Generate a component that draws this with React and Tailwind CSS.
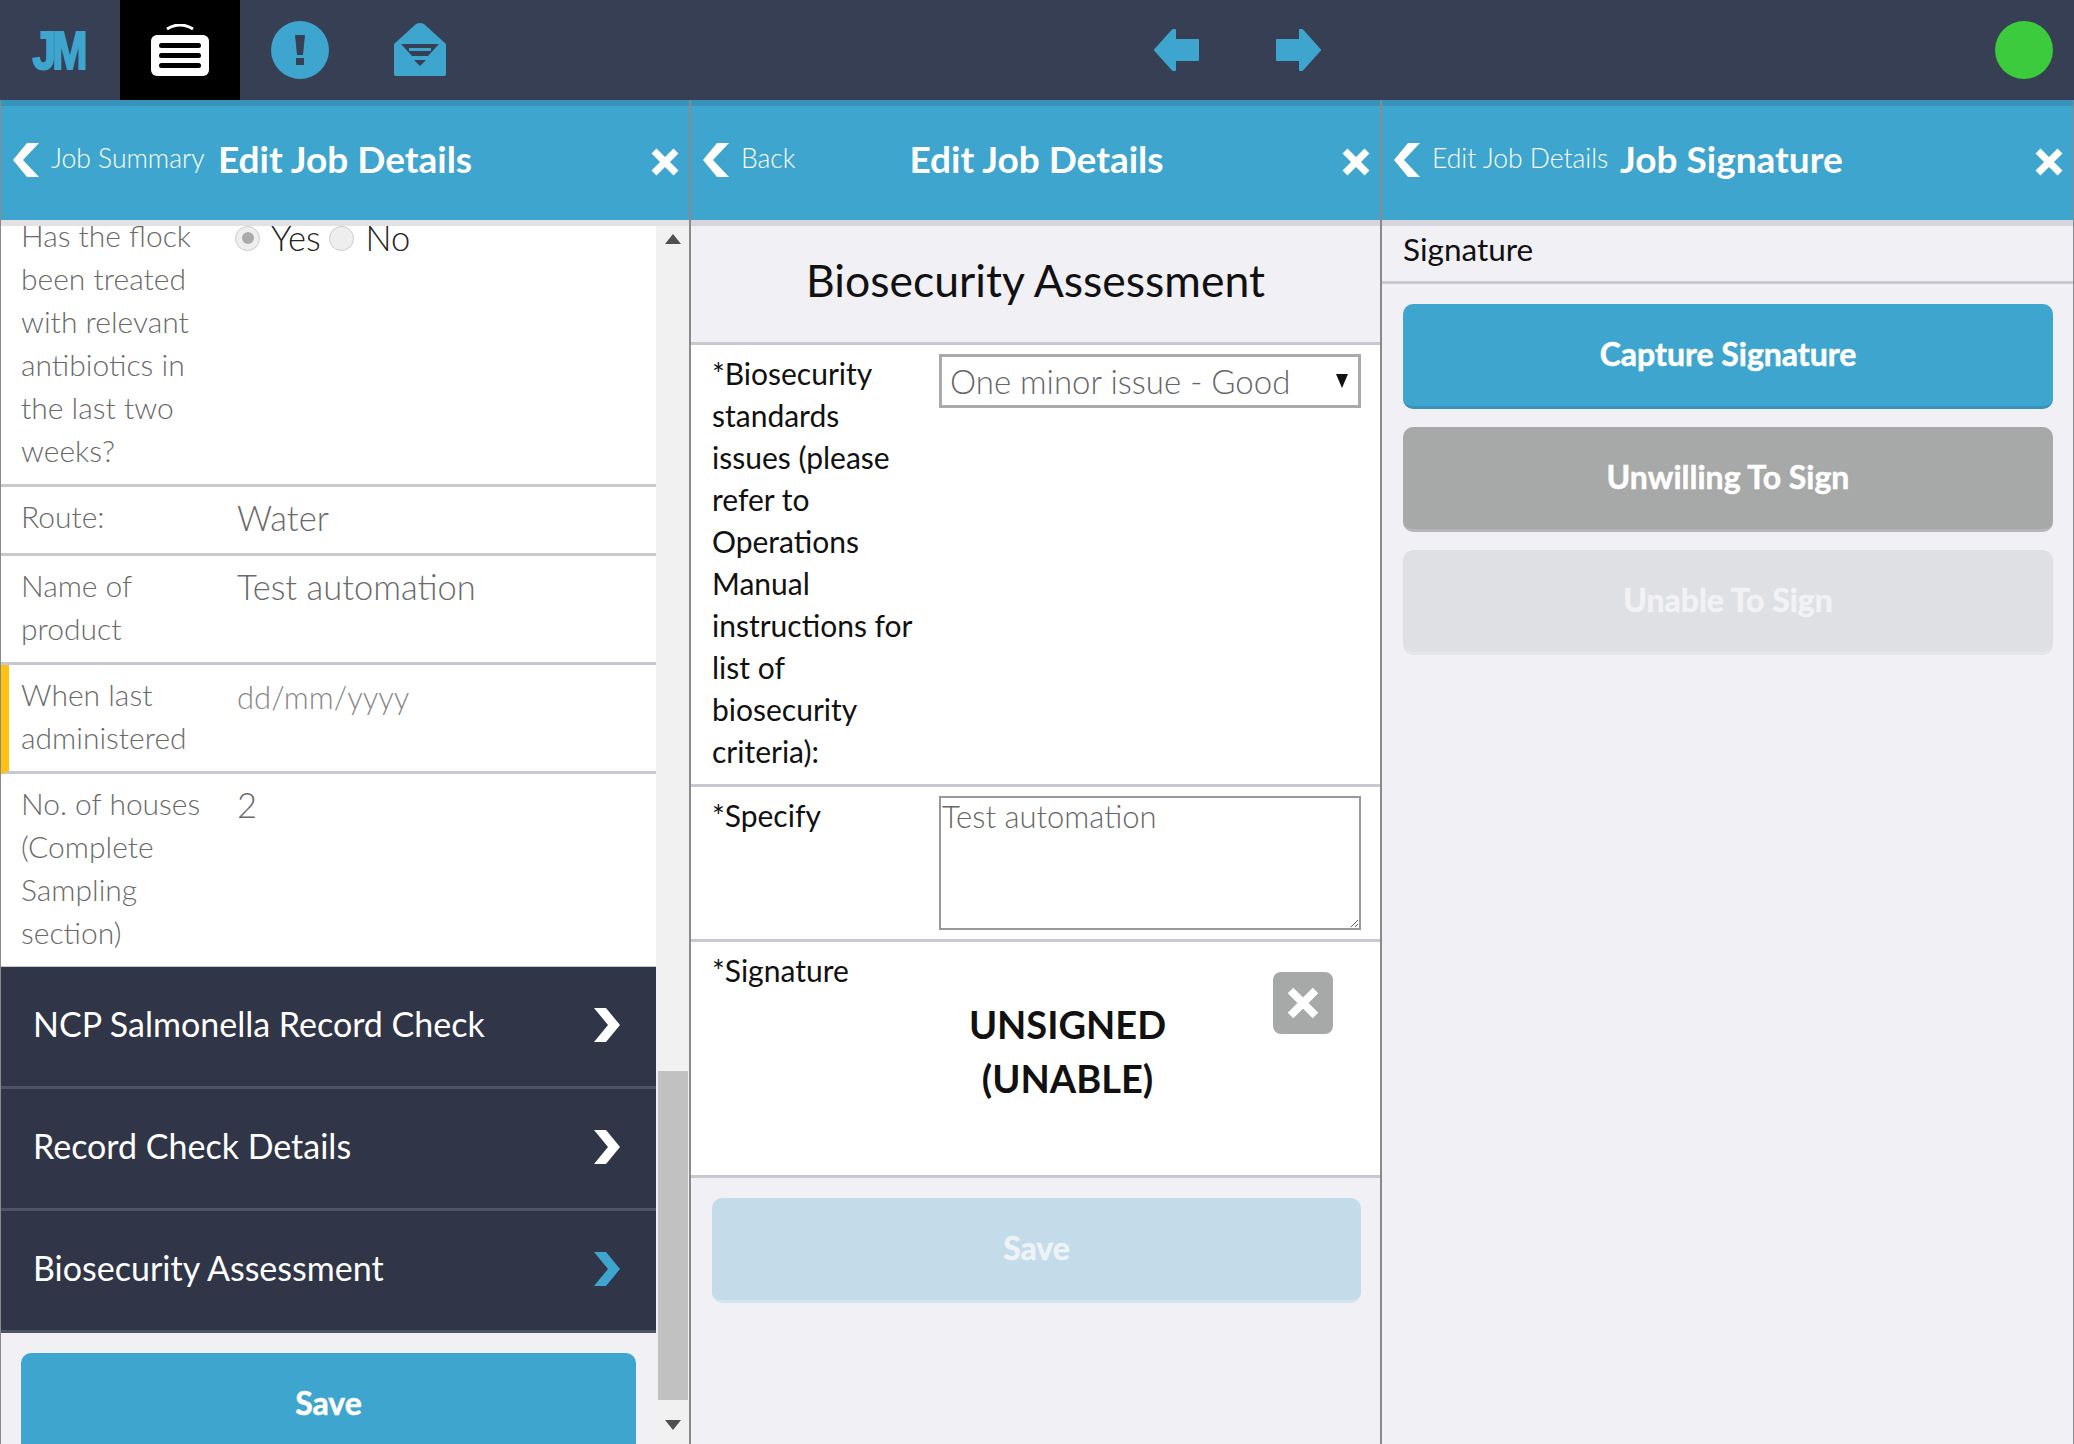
function Chevron({ dir = "left", color = "#fff", className = "" }) {
  const pts = dir === "left" ? "26,0 10,17 26,34 14,34 0,17 14,0" : "0,0 12,0 26,17 12,34 0,34 14,17";
  return (
    <svg width="26" height="34" viewBox="0 0 26 34" className={className}>
      <polygon points={pts} fill={color} />
    </svg>
  );
}

function CloseX({ size = 30 }) {
  return (
    <svg width={size} height={size} viewBox="0 0 30 30">
      <path d="M4 4 L26 26 M26 4 L4 26" stroke="#fff" strokeWidth="7" />
    </svg>
  );
}

function Header({ back, backClass, title, titleClass = "" }) {
  return (
    <div className="shrink-0 h-[120px] border-t-[6px] border-[#3893ba] bg-[#3ea5ce] flex items-center text-white pb-[6px]">
      <div className={`flex items-center shrink-0 pl-[12px] ${backClass}`}>
        <Chevron />
        <span className="ml-[12px] -mt-[2px] text-[26.5px] font-light whitespace-nowrap">{back}</span>
      </div>
      <div className={`flex-1 -mt-[2px] text-[37px] font-bold whitespace-nowrap ${titleClass}`}>{title}</div>
      <div className="shrink-0 mr-[9px] mt-[3px]">
        <CloseX />
      </div>
    </div>
  );
}

function Row({ label, value, children, accent }) {
  return (
    <div className={`flex border-b-[3px] border-[#c8c8d0] bg-white pt-[8px] pb-[12px] ${accent ? "border-l-[8px] border-l-[#ffc20e] pl-[12px]" : "pl-[20px]"}`}>
      <div className="w-[216px] shrink-0 pr-[8px] text-[#6a6a6a] text-[30px] leading-[43px] font-light">{label}</div>
      <div className="text-[34.5px] leading-[46px] font-light text-[#6a6a6a]">{value}{children}</div>
    </div>
  );
}

function MenuRow({ text, color = "#fff" }) {
  return (
    <div className="h-[122px] pl-[32px] pr-[36px] pb-[6px] flex items-center justify-between border-b-[3px] border-[#4e5464] text-white text-[34px]">
      <span>{text}</span>
      <Chevron dir="right" color={color} className="mt-[2px]" />
    </div>
  );
}

function Btn({ text, className = "" }) {
  return (
    <div className={`h-[105px] pb-[3px] rounded-[10px] flex items-center justify-center font-bold text-[32px] [-webkit-text-stroke:0.5px_currentColor] text-white border-b-[3px] ${className}`}>
      {text}
    </div>
  );
}

function TopBar() {
  return (
    <div className="h-[100px] bg-[#363f54] flex items-center relative shrink-0">
      <div className="w-[120px] h-full flex items-center justify-center pr-[3px]">
        <span className="text-[#3ea5ce] text-[53px] font-bold tracking-[-0.09em] leading-none scale-x-[0.8] [font-family:'Liberation_Sans',sans-serif] [-webkit-text-stroke:2px_#3ea5ce]">JM</span>
      </div>
      <div className="w-[120px] h-full bg-black flex items-center justify-center">
        <svg width="58" height="52" viewBox="0 0 58 52">
          <path d="M16 5 Q29 -3 42 5" stroke="#fff" strokeWidth="3" fill="none" />
          <rect x="0" y="11" width="58" height="41" rx="6" fill="#fff" />
          <rect x="8" y="19" width="42" height="5" rx="2.5" fill="#000" />
          <rect x="8" y="29" width="42" height="5" rx="2.5" fill="#000" />
          <rect x="8" y="39" width="42" height="5" rx="2.5" fill="#000" />
        </svg>
      </div>
      <div className="w-[120px] h-full flex items-center justify-center">
        <svg width="58" height="58" viewBox="0 0 58 58">
          <circle cx="29" cy="29" r="29" fill="#3ea5ce" />
          <polygon points="24,14 34,14 32,34 26,34" fill="#363f54" />
          <rect x="25" y="37" width="8" height="7" fill="#363f54" />
        </svg>
      </div>
      <div className="w-[120px] h-full flex items-center justify-center">
        <svg width="52" height="54" viewBox="0 0 52 54">
          <path d="M0 21 L22 1 Q26 -1 30 1 L52 21 V51 Q52 53 50 53 H2 Q0 53 0 51 Z" fill="#3ea5ce" />
          <polygon points="7,21 45,21 34,33 18,33" fill="#363f54" />
          <rect x="15" y="25" width="22" height="3" fill="#3ea5ce" />
          <polygon points="20,37 32,37 26,43" fill="#363f54" />
        </svg>
      </div>
      <div className="flex-1 flex items-center justify-center gap-[77px]">
        <svg width="45" height="42" viewBox="0 0 45 42">
          <polygon points="1,21 19,1 21,1 21,11 44,11 44,31 21,31 21,41 19,41" fill="#3ea5ce" stroke="#3ea5ce" strokeWidth="2" strokeLinejoin="round" />
        </svg>
        <svg width="45" height="42" viewBox="0 0 45 42">
          <polygon points="44,21 26,1 24,1 24,11 1,11 1,31 24,31 24,41 26,41" fill="#3ea5ce" stroke="#3ea5ce" strokeWidth="2" strokeLinejoin="round" />
        </svg>
      </div>
      <div className="w-[58px] h-[58px] rounded-full bg-[#3ccb3c] mr-[21px]" />
    </div>
  );
}

function LeftPanel() {
  return (
    <div className="w-[691px] shrink-0 border-l-[1px] border-r-[2px] border-[#8a8a8a] flex flex-col h-[1344px] overflow-hidden">
      <Header back="Job Summary" backClass="w-[217px]" title="Edit Job Details" />
      <div className="flex-1 border-t-[6px] border-[#e2e2e4] flex min-h-0">
        <div className="w-[655px] shrink-0 bg-[#f0f0f5] overflow-hidden">
          <Row
            label={
              <>
                <div className="-mt-[20px]">Has the flock</div>
                <div>been treated</div>
                <div>with relevant</div>
                <div>antibiotics in</div>
                <div>the last two</div>
                <div>weeks?</div>
              </>
            }
          >
            <div className="flex items-center -mt-[19px] -ml-[2px] text-[#222]">
              <span className="w-[25px] h-[25px] rounded-full bg-[#eee] border border-[#ccc] flex items-center justify-center mr-[11px]">
                <span className="w-[12px] h-[12px] rounded-full bg-[#aaa]" />
              </span>
              <span>Yes</span>
              <span className="w-[25px] h-[25px] rounded-full bg-[#eee] border border-[#ccc] ml-[8px] mr-[12px]" />
              <span>No</span>
            </div>
          </Row>
          <Row label="Route:" value="Water" />
          <Row label={<>Name of product</>} value="Test automation" />
          <Row accent label={<>When last administered</>} value={<span className="text-[#888] text-[31px]">dd/mm/yyyy</span>} />
          <Row label={<>No. of houses (Complete Sampling section)</>} value="2" />
          <div className="bg-[#303647] -mt-[2px]">
            <MenuRow text="NCP Salmonella Record Check" />
            <MenuRow text="Record Check Details" />
            <MenuRow text="Biosecurity Assessment" color="#3ea5ce" />
          </div>
          <div className="px-[20px] pt-[20px]">
            <Btn text="Save" className="bg-[#3ea5ce] border-[#3ea5ce]" />
          </div>
        </div>
        <div className="flex-1 bg-[#f1f1f1] flex flex-col items-center">
          <svg width="16" height="10" viewBox="0 0 16 10" className="mt-[8px]">
            <polygon points="8,0 16,10 0,10" fill="#505050" />
          </svg>
          <div className="flex-1" />
          <div className="w-[30px] h-[329px] bg-[#c1c1c1]" />
          <svg width="16" height="10" viewBox="0 0 16 10" className="mt-[20px] mb-[14px]">
            <polygon points="0,0 16,0 8,10" fill="#505050" />
          </svg>
        </div>
      </div>
    </div>
  );
}

const BIO_LABEL = ["*Biosecurity", "standards", "issues (please", "refer to", "Operations", "Manual", "instructions for", "list of", "biosecurity", "criteria):"];

function MiddlePanel() {
  return (
    <div className="w-[691px] shrink-0 border-r-[2px] border-[#8a8a8a] flex flex-col h-[1344px] overflow-hidden">
      <Header back="Back" backClass="w-[150px]" title="Edit Job Details" titleClass="text-center pr-[109px]" />
      <div className="flex-1 bg-[#f0f0f5] border-t-[6px] border-[#d6d6dc]">
        <div className="h-[119px] pb-[7px] flex items-center justify-center text-[44.5px] text-[#111] border-b-[3px] border-[#c8c8d0]">
          Biosecurity Assessment
        </div>
        <div className="flex bg-white border-b-[3px] border-[#c8c8d0] pl-[21px] pr-[19px] pt-[9px] pb-[10px]">
          <div className="w-[227px] -mt-[2px] mb-[2px] shrink-0 text-[30px] leading-[42px] font-normal text-[#111]">
            {BIO_LABEL.map((line) => (
              <div key={line}>{line}</div>
            ))}
          </div>
          <div className="flex-1 relative">
            <select
              defaultValue="One minor issue - Good"
              className="appearance-none w-full h-[54px] border-[3px] border-[#aaa] rounded-none bg-white pl-[8px] pb-[5px] text-[33px] font-light text-[#666] outline-none"
            >
              <option>One minor issue - Good</option>
            </select>
            <svg width="12" height="14" viewBox="0 0 12 14" className="absolute right-[13px] top-[20px]">
              <polygon points="0,0 12,0 6,14" fill="#111" />
            </svg>
          </div>
        </div>
        <div className="flex bg-white border-b-[3px] border-[#c8c8d0] pl-[21px] pr-[19px] pt-[9px] pb-[9px]">
          <div className="w-[227px] -mt-[2px] shrink-0 text-[30px] leading-[42px] text-[#111]">*Specify</div>
          <textarea
            readOnly
            defaultValue="Test automation"
            className="flex-1 h-[134px] border-[2px] border-[#999] bg-white pl-[1px] text-[31px] font-light leading-[36px] text-[#666] outline-none"
          />
        </div>
        <div className="bg-white border-b-[3px] border-[#c8c8d0] h-[236px] pl-[21px] pr-[47px] pt-[7px] flex">
          <div className="w-[150px] shrink-0 text-[30px] leading-[42px] text-[#111] whitespace-nowrap">*Signature</div>
          <div className="flex-1 pt-[48px] text-center text-[38px] leading-[54px] font-bold text-[#111]">
            UNSIGNED
            <br />
            (UNABLE)
          </div>
          <div className="w-[60px] h-[62px] mt-[23px] rounded-[8px] bg-[#a7a9a8] flex items-center justify-center">
            <CloseX size={34} />
          </div>
        </div>
        <div className="pl-[21px] pr-[19px] pt-[20px]">
          <Btn text="Save" className="bg-[#c4dcea] border-[#d4e4ee] !text-[#eef3f7]" />
        </div>
      </div>
    </div>
  );
}

function RightPanel() {
  return (
    <div className="flex-1 border-r-[1px] border-[#8a8a8a] flex flex-col h-[1344px] overflow-hidden">
      <Header back="Edit Job Details" backClass="w-[238px]" title="Job Signature" />
      <div className="flex-1 bg-[#f0f0f5] border-t-[6px] border-[#d6d6dc]">
        <div className="h-[58px] pl-[21px] pb-[8px] flex items-center text-[31.5px] text-[#111] border-b-[3px] border-[#c8c8d0]">
          Signature
        </div>
        <div className="pl-[21px] pr-[20px] pt-[20px] flex flex-col gap-[18px]">
          <Btn text="Capture Signature" className="bg-[#3ea5ce] border-[#3893ba]" />
          <Btn text="Unwilling To Sign" className="bg-[#a7a9a8] border-[#b5b7b6]" />
          <Btn text="Unable To Sign" className="bg-[#dfe0e4] border-[#e6e6ea] !text-[#f2f2f5]" />
        </div>
      </div>
    </div>
  );
}

export default function App() {
  return (
    <div className="w-[2074px] h-[1444px] overflow-hidden flex flex-col [font-family:Lato,sans-serif]">
      <TopBar />
      <div className="flex flex-1 min-h-0">
        <LeftPanel />
        <MiddlePanel />
        <RightPanel />
      </div>
    </div>
  );
}
